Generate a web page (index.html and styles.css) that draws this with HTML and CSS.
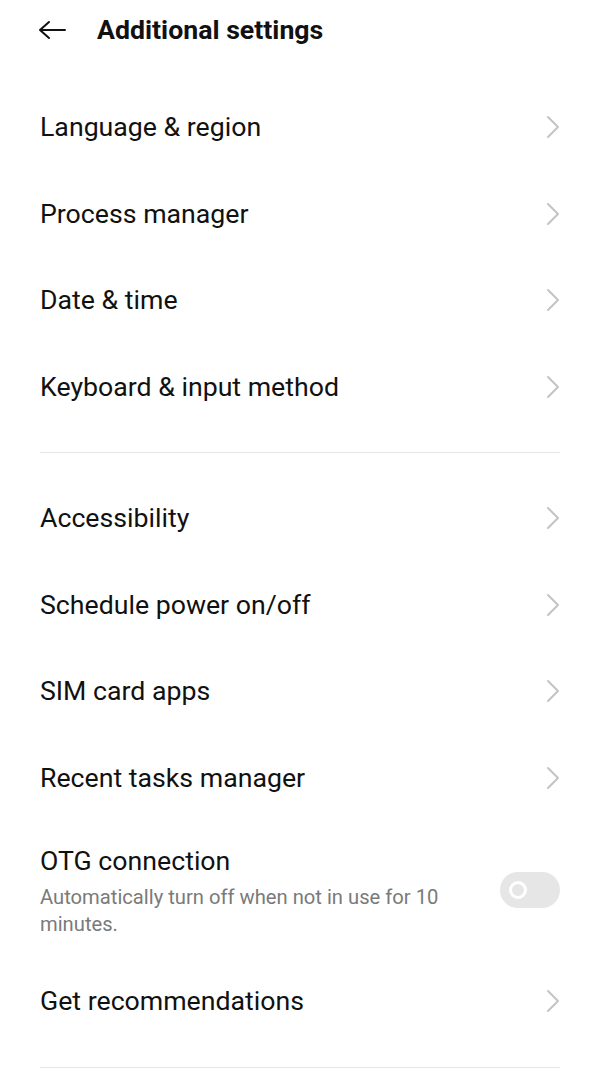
FILE: index.html
```html
<!DOCTYPE html>
<html lang="en">
<head>
    <meta charset="UTF-8">
    <meta name="viewport" content="width=device-width, initial-scale=1.0">
    <title>Additional settings</title>
    <link rel="stylesheet" href="styles.css">
</head>
<body>
    <div class="header">
        <svg class="back" width="28" height="20" viewBox="0 0 28 20">
            <path d="M11 2 L2 10 L11 18 M2 10 H27" fill="none" stroke="#111" stroke-width="2" stroke-linecap="round" stroke-linejoin="round"/>
        </svg>
        <h1>Additional settings</h1>
    </div>

    <div class="list">
        <div class="group">
            <div class="row"><span>Language &amp; region</span><svg class="chevron" viewBox="0 0 14 24"><polyline points="2,2 12,12 2,22"/></svg></div>
            <div class="row"><span>Process manager</span><svg class="chevron" viewBox="0 0 14 24"><polyline points="2,2 12,12 2,22"/></svg></div>
            <div class="row"><span>Date &amp; time</span><svg class="chevron" viewBox="0 0 14 24"><polyline points="2,2 12,12 2,22"/></svg></div>
            <div class="row"><span>Keyboard &amp; input method</span><svg class="chevron" viewBox="0 0 14 24"><polyline points="2,2 12,12 2,22"/></svg></div>
        </div>

        <div class="divider"></div>

        <div class="group">
            <div class="row"><span>Accessibility</span><svg class="chevron" viewBox="0 0 14 24"><polyline points="2,2 12,12 2,22"/></svg></div>
            <div class="row"><span>Schedule power on/off</span><svg class="chevron" viewBox="0 0 14 24"><polyline points="2,2 12,12 2,22"/></svg></div>
            <div class="row"><span>SIM card apps</span><svg class="chevron" viewBox="0 0 14 24"><polyline points="2,2 12,12 2,22"/></svg></div>
            <div class="row"><span>Recent tasks manager</span><svg class="chevron" viewBox="0 0 14 24"><polyline points="2,2 12,12 2,22"/></svg></div>
            <div class="row row-tall">
                <div class="texts">
                    <div class="title">OTG connection</div>
                    <div class="sub">Automatically turn off when not in use for 10 minutes.</div>
                </div>
                <div class="toggle"><div class="knob"></div></div>
            </div>
            <div class="row"><span>Get recommendations</span><svg class="chevron" viewBox="0 0 14 24"><polyline points="2,2 12,12 2,22"/></svg></div>
        </div>

        <div class="divider"></div>
    </div>
</body>
</html>
```

FILE: styles.css
```css
body {
    margin: 0;
    padding: 0;
    background-color: #fff;
    color: #111;
    font-family: Roboto, "Noto Sans", sans-serif;
}

.header {
    height: 60px;
    display: flex;
    align-items: center;
    padding-left: 38px;
}

.back {
    margin-right: 31px;
}

h1 {
    margin: 0;
    font-size: 26.7px;
    font-weight: 700;
    color: #111;
}

.list {
    padding: 24px 40px 0 40px;
}

.row {
    height: 86.5px;
    display: flex;
    align-items: center;
    justify-content: space-between;
    font-size: 26.7px;
}

.chevron {
    width: 14px;
    height: 24px;
}

.chevron polyline {
    fill: none;
    stroke: #c4c4c4;
    stroke-width: 2;
    stroke-linecap: round;
    stroke-linejoin: round;
}

.divider {
    height: 1px;
    background-color: #e6e6e6;
    margin: 22px 0;
}

.row-tall {
    height: auto;
    padding: 24px 0 20px 0;
}

.texts {
    width: 420px;
}

.title {
    font-size: 26.7px;
    line-height: 32px;
}

.sub {
    margin-top: 7px;
    font-size: 20.2px;
    line-height: 27px;
    color: #7a7a7a;
}

.toggle {
    width: 60px;
    height: 36px;
    border-radius: 18px;
    background-color: #e6e6e6;
    display: flex;
    align-items: center;
    margin-top: -3px;
}

.knob {
    width: 12px;
    height: 12px;
    border: 3px solid #fff;
    border-radius: 50%;
    margin-left: 9px;
}
```
